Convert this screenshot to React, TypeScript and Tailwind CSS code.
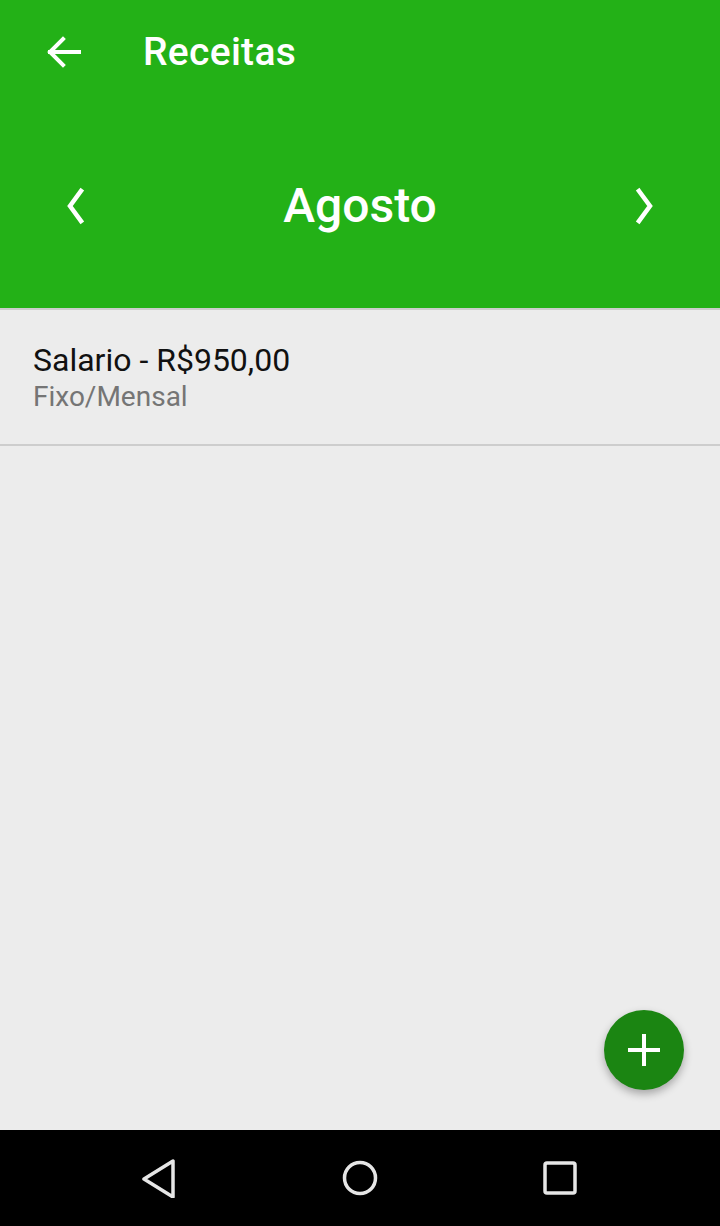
import React from 'react';

export default function App() {
  const lancamentos = [
    { titulo: 'Salario - R$950,00', tipo: 'Fixo/Mensal' }
  ];

  return (
    <div className="w-[720px] h-[1226px] flex flex-col bg-[#ececec] font-['Roboto','Noto_Sans',sans-serif]">
      {/* Header */}
      <header className="h-[308px] bg-[#23b117] flex flex-col text-white">
        <div className="h-[104px] flex items-center">
          <button className="ml-[40px] w-[48px] h-[48px] flex items-center justify-center">
            <svg width="48" height="48" viewBox="0 0 48 48" fill="none" stroke="white" strokeWidth="4" strokeLinecap="square">
              <path d="M39 24H10" />
              <path d="M23 11L10 24L23 37" />
            </svg>
          </button>
          <h1 className="ml-[55px] text-[39px] font-medium leading-none tracking-[0.3px]">Receitas</h1>
        </div>
        <div className="flex-1 flex items-center justify-between px-[60px]">
          <button className="w-[30px] h-[40px] flex items-center justify-center">
            <svg width="24" height="38" viewBox="0 0 24 38" fill="none" stroke="white" strokeWidth="4.5" strokeLinecap="square">
              <path d="M18 4L7 19L18 34" />
            </svg>
          </button>
          <div className="text-[48px] font-medium leading-none">Agosto</div>
          <button className="w-[30px] h-[40px] flex items-center justify-center">
            <svg width="24" height="38" viewBox="0 0 24 38" fill="none" stroke="white" strokeWidth="4.5" strokeLinecap="square">
              <path d="M6 4L17 19L6 34" />
            </svg>
          </button>
        </div>
      </header>

      {/* Lista */}
      <main className="relative flex-1 border-t-2 border-[#cdcdcd]">
        {lancamentos.map((item, idx) => (
          <div key={idx} className="h-[136px] border-b-2 border-[#cdcdcd] pl-[33px] pt-[30px]">
            <div className="text-[32px] leading-[40px] text-[#111]">{item.titulo}</div>
            <div className="text-[28px] leading-[34px] text-[#757575]">{item.tipo}</div>
          </div>
        ))}

        {/* FAB */}
        <button className="absolute right-[36px] bottom-[40px] w-[80px] h-[80px] rounded-full bg-[#1b8512] shadow-[0_4px_8px_rgba(0,0,0,0.3)] flex items-center justify-center">
          <svg width="34" height="34" viewBox="0 0 34 34" fill="none" stroke="white" strokeWidth="4">
            <path d="M17 1V33" />
            <path d="M1 17H33" />
          </svg>
        </button>
      </main>

      {/* Barra de navegação */}
      <nav className="h-[96px] bg-black flex items-center">
        <div className="w-[200px] flex justify-end pr-[22px]">
          <svg width="40" height="40" viewBox="0 0 40 40" fill="none" stroke="#e6e6e6" strokeWidth="3.5" strokeLinejoin="round">
            <path d="M35 3V39L6 21Z" />
          </svg>
        </div>
        <div className="flex-1 flex justify-center">
          <svg width="40" height="40" viewBox="0 0 40 40" fill="none" stroke="#e6e6e6" strokeWidth="3.5">
            <circle cx="20" cy="20" r="15.5" />
          </svg>
        </div>
        <div className="w-[200px] flex justify-start pl-[20px]">
          <svg width="40" height="40" viewBox="0 0 40 40" fill="none" stroke="#e6e6e6" strokeWidth="3.5" strokeLinejoin="round">
            <rect x="5" y="5" width="30" height="30" rx="2" />
          </svg>
        </div>
      </nav>
    </div>
  );
}
